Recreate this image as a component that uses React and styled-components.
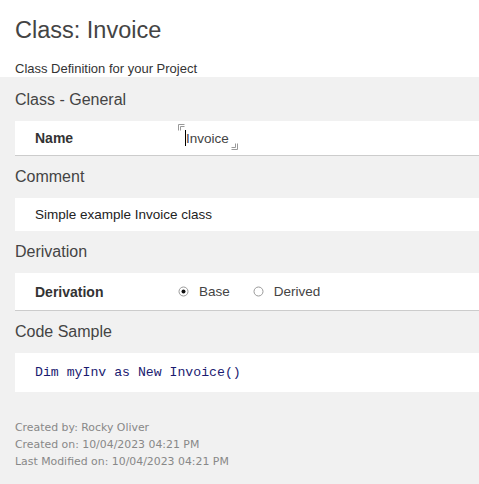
import React from "react";
import styled, { createGlobalStyle } from "styled-components";

const Global = createGlobalStyle`
  html, body { margin: 0; padding: 0; background: #f1f1f1; }
  body { font-family: "Liberation Sans", Arial, sans-serif; color: #333; }
`;

const Page = styled.div`
  width: 479px;
  min-height: 484px;
  background: #f1f1f1;
`;

const Top = styled.div`
  background: #fff;
  padding: 16px 0 0 15px;
  height: 61px;
  box-sizing: border-box;
  height: 77px;
`;

const Title = styled.h1`
  margin: 0;
  font-weight: normal;
  font-size: 23.5px;
  line-height: 28px;
  color: #444;
`;

const Subtitle = styled.div`
  margin-top: 17px;
  font-size: 13px;
  line-height: 15px;
  color: #333;
`;

const Body = styled.div`
  padding: 2px 0 0 15px;
`;

const SectionHeader = styled.div`
  margin-left: -15px;
  padding-left: 15px;
  height: 42px;
  display: flex;
  align-items: center;
  font-size: 16px;
  color: #444;
`;

const Panel = styled.div`
  background: #fff;
  display: flex;
  align-items: center;
  height: ${(p) => p.$h}px;
  padding-left: 20px;
  border-bottom: ${(p) => (p.$border ? "1px solid #ccc" : "none")};
  font-size: 13.5px;
  color: #222;
`;

const Label = styled.div`
  width: 150px;
  flex: none;
  font-weight: bold;
  font-size: 14px;
  color: #333;
`;

const Value = styled.div`
  position: relative;
  color: #444;
  font-size: 13.5px;
  padding-right: 8px;
`;

const Corner = styled.svg`
  position: absolute;
  ${(p) => (p.$tl ? "left: -7px; top: -6px;" : "right: -1px; bottom: -4px;")}
`;

const Caret = styled.span`
  display: inline-block;
  width: 1px;
  height: 16px;
  background: #000;
  vertical-align: -3px;
`;

const Radios = styled.div`
  display: flex;
  align-items: center;
  gap: 23px;
  margin-left: -7px;
`;

const RadioItem = styled.label`
  display: flex;
  align-items: center;
  gap: 10px;
  color: #444;
  font-size: 13.5px;
`;

const Code = styled.div`
  font-family: "Liberation Mono", "DejaVu Sans Mono", monospace;
  font-size: 13.2px;
  color: #1a1a70;
`;

const Footer = styled.div`
  padding: 27px 0 0 15px;
  font-family: "DejaVu Sans", Tahoma, sans-serif;
  font-size: 10.9px;
  line-height: 17px;
  color: #888;
`;

function Radio({ checked }) {
  return (
    <svg width="11" height="11" viewBox="0 0 11 11">
      <circle cx="5.5" cy="5.5" r="4.5" fill="#fff" stroke="#999" strokeWidth="1" />
      {checked && <circle cx="5.5" cy="5.5" r="2" fill="#111" />}
    </svg>
  );
}

function CornerMark({ tl }) {
  return (
    <Corner $tl={tl} width="7" height="7" viewBox="0 0 7 7">
      {tl ? (
        <path d="M0.5 6.5V0.5H6.5M2.5 6.5V2.5H6.5" fill="none" stroke="#999" strokeWidth="1" />
      ) : (
        <path d="M6.5 0.5V6.5H0.5M4.5 0.5V4.5H0.5" fill="none" stroke="#999" strokeWidth="1" />
      )}
    </Corner>
  );
}

export default function App() {
  return (
    <Page>
      <Global />
      <Top>
        <Title>Class: Invoice</Title>
        <Subtitle>Class Definition for your Project</Subtitle>
      </Top>
      <Body>
        <SectionHeader>Class - General</SectionHeader>
        <Panel $h={34} $border>
          <Label>Name</Label>
          <Value>
            <CornerMark tl />
            <Caret />
            Invoice
            <CornerMark />
          </Value>
        </Panel>
        <SectionHeader>Comment</SectionHeader>
        <Panel $h={33}>Simple example Invoice class</Panel>
        <SectionHeader>Derivation</SectionHeader>
        <Panel $h={37} $border>
          <Label>Derivation</Label>
          <Radios>
            <RadioItem>
              <Radio checked />
              Base
            </RadioItem>
            <RadioItem>
              <Radio />
              Derived
            </RadioItem>
          </Radios>
        </Panel>
        <SectionHeader>Code Sample</SectionHeader>
        <Panel $h={39}>
          <Code>Dim myInv as New Invoice()</Code>
        </Panel>
      </Body>
      <Footer>
        <div>Created by: Rocky Oliver</div>
        <div>Created on: 10/04/2023 04:21 PM</div>
        <div>Last Modified on: 10/04/2023 04:21 PM</div>
      </Footer>
    </Page>
  );
}
